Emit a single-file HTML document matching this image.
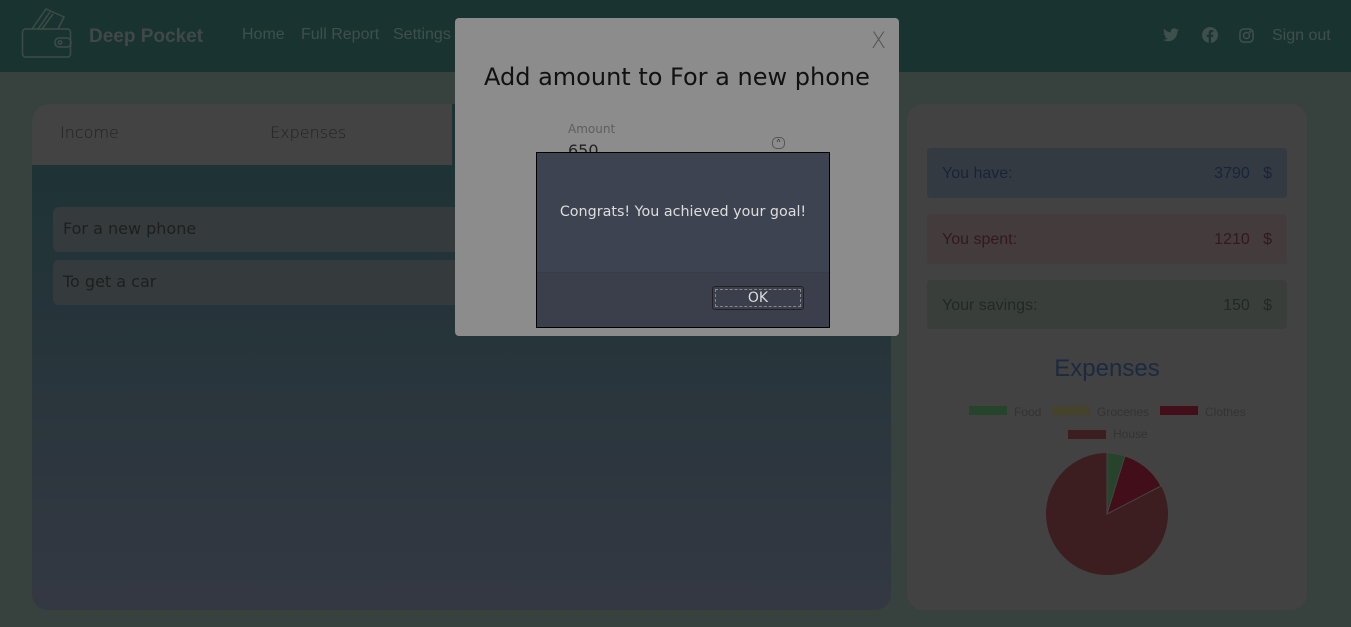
<!DOCTYPE html>
<html><head><meta charset="utf-8"><style>
*{box-sizing:border-box;margin:0;padding:0}
body{width:1351px;height:627px;overflow:hidden;background:#37413d;font-family:"Liberation Sans",sans-serif;position:relative}
.hdr{position:absolute;left:0;top:0;width:1351px;height:72px;background:#193430}
.abs{position:absolute}
.nav{color:#3f4f4b;font-size:16px;top:26px}
.card{position:absolute;border-radius:16px}
</style></head><body>
<div class="hdr"></div>
<svg class="abs" style="left:20px;top:7px" width="54" height="52" viewBox="0 0 54 52" fill="none" stroke="#3d4b48" stroke-width="1.5">
<rect x="2.5" y="22" width="48" height="28" rx="3"/>
<path d="M12 22 L26 2 L44 10 L38 22"/><path d="M18 22 L30 5 M22 22 L33 7"/>
<rect x="35" y="31" width="16" height="9" rx="4"/><circle cx="40" cy="35.5" r="1.8"/>
</svg>
<div class="abs" style="left:89px;top:26px;font-size:19px;font-weight:bold;color:#404848">Deep Pocket</div>
<div class="abs nav" style="left:242px">Home</div>
<div class="abs nav" style="left:301px">Full Report</div>
<div class="abs nav" style="left:393px">Settings</div>
<svg class="abs" style="left:1163px;top:28px" width="16" height="14" viewBox="0 0 24 20"><path fill="#3f4f4b" d="M24 2.4a10 10 0 0 1-2.8.8A5 5 0 0 0 23.3.4a10 10 0 0 1-3.1 1.2A4.9 4.9 0 0 0 11.8 6 14 14 0 0 1 1.7.9a4.9 4.9 0 0 0 1.5 6.6A4.9 4.9 0 0 1 1 6.9a4.9 4.9 0 0 0 3.9 4.8 5 5 0 0 1-2.2.1 4.9 4.9 0 0 0 4.6 3.4A9.9 9.9 0 0 1 0 17.3 14 14 0 0 0 7.5 19.5c9 0 14-7.5 14-14v-.6A10 10 0 0 0 24 2.4z"/></svg>
<svg class="abs" style="left:1202px;top:27px" width="16" height="16" viewBox="0 0 16 16"><circle cx="8" cy="8" r="8" fill="#3f4f4b"/><path d="M9 16V10h2l.3-2.3H9V6.3c0-.6.2-1 1-1h1.3V3.2A16 16 0 0 0 9.4 3C7.8 3 6.7 4 6.7 5.9v1.8H4.8V10h1.9v6z" fill="#193430"/></svg>
<svg class="abs" style="left:1239px;top:28px" width="15" height="15" viewBox="0 0 16 16" fill="none" stroke="#3f4f4b" stroke-width="1.6"><rect x="1" y="1" width="14" height="14" rx="4"/><circle cx="8" cy="8" r="3.2"/><circle cx="12" cy="4" r=".5" fill="#3f4f4b"/></svg>
<div class="abs nav" style="left:1272px;top:27px">Sign out</div>

<div class="card" style="left:32px;top:104px;width:859px;height:506px;background:linear-gradient(#1b3234,#343842);overflow:hidden">
<div style="height:61px;background:#434343;width:420px"></div>
<div class="abs" style="left:28px;top:19px;font-size:16px;color:#222;font-family:'DejaVu Sans',sans-serif;font-weight:300">Income</div>
<div class="abs" style="left:238px;top:19px;font-size:16px;color:#222;font-family:'DejaVu Sans',sans-serif;font-weight:300">Expenses</div>
<div class="abs" style="left:21px;top:103px;width:820px;height:45px;background:#353b3d;border-radius:6px;padding:12px 10px;font-size:16px;color:#1e1e1e;font-family:'DejaVu Sans',sans-serif">For a new phone</div>
<div class="abs" style="left:21px;top:156px;width:820px;height:45px;background:#353b3d;border-radius:6px;padding:12px 10px;font-size:16px;color:#1e1e1e;font-family:'DejaVu Sans',sans-serif">To get a car</div>
</div>

<div class="card" style="left:907px;top:104px;width:400px;height:506px;background:#424242">
<div class="abs" style="left:20px;top:44px;width:360px;height:50px;background:#343a42;border-radius:4px;font-size:16px;color:#18243a;padding:17px 15px">You have:<span style="position:absolute;right:15px">3790 &nbsp; $</span></div>
<div class="abs" style="left:20px;top:110px;width:360px;height:50px;background:#433b3c;border-radius:4px;font-size:16px;color:#33191e;padding:17px 15px">You spent:<span style="position:absolute;right:15px">1210 &nbsp; $</span></div>
<div class="abs" style="left:20px;top:176px;width:360px;height:49px;background:#3a3e3b;border-radius:4px;font-size:16px;color:#1e2a22;padding:17px 15px">Your savings:<span style="position:absolute;right:15px">150 &nbsp; $</span></div>
<div class="abs" style="left:0;width:400px;top:251px;text-align:center;font-size:24px;color:#1c2a40">Expenses</div>
<div class="abs" style="left:62px;top:302px;width:38px;height:9px;background:#26432c"></div><div class="abs" style="left:107px;top:301px;font-size:12px;color:#333">Food</div>
<div class="abs" style="left:145px;top:302px;width:38px;height:9px;background:#45432b"></div><div class="abs" style="left:190px;top:301px;font-size:12px;color:#333">Groceries</div>
<div class="abs" style="left:253px;top:302px;width:38px;height:9px;background:#420e19"></div><div class="abs" style="left:298px;top:301px;font-size:12px;color:#333">Clothes</div>
<div class="abs" style="left:161px;top:326px;width:38px;height:9px;background:#3d1e20"></div><div class="abs" style="left:206px;top:323px;font-size:12px;color:#333">House</div>
<svg class="abs" style="left:138px;top:348px" width="124" height="124" viewBox="-62 -62 124 124">
<circle r="61" fill="#3c1e20"/>
<path d="M0 0 L0 -61 A61 61 0 0 1 18 -58 Z" fill="#26432c" stroke="#444" stroke-width="1"/>
<path d="M0 0 L18 -58 A61 61 0 0 1 54 -28 Z" fill="#420e19" stroke="#444" stroke-width="1"/>
</svg>
</div>

<div class="abs" style="left:455px;top:18px;width:444px;height:318px;background:#8c8c8c;border-radius:4px">
<div class="abs" style="left:416px;top:11px;font-size:22px;color:#555;font-family:'DejaVu Sans',sans-serif;font-weight:300">X</div>
<div class="abs" style="left:29px;top:45px;font-size:24px;color:#111;font-family:'DejaVu Sans',sans-serif">Add amount to For a new phone</div>
<div class="abs" style="left:113px;top:104px;font-size:12px;color:#5e5e5e;font-family:'DejaVu Sans',sans-serif">Amount</div>
<div class="abs" style="left:113px;top:123px;font-size:16px;color:#222;font-family:'DejaVu Sans',sans-serif">650</div>
<div class="abs" style="left:317px;top:119px;width:13px;height:12px;border:1px solid #555;border-radius:5px;font-size:8px;text-align:center;line-height:10px;color:#222">^</div>
</div>

<div class="abs" style="left:536px;top:152px;width:294px;height:176px;background:#3d4350;border:1px solid #000">
<div class="abs" style="left:0;width:292px;top:51px;text-align:center;font-size:14.3px;color:#ddd;font-family:'DejaVu Sans',sans-serif">Congrats! You achieved your goal!</div>
<div class="abs" style="left:0;top:119px;width:292px;height:55px;background:#3a3f4b;border-top:1px solid #373c47"></div>
<div class="abs" style="left:175px;top:133px;width:92px;height:24px;border:1px solid #222;border-radius:3px;background:#3a3f4b;padding:2px">
<div style="border:1px dashed #888;height:18px;text-align:center;font-size:14px;line-height:17px;color:#ddd;font-family:'DejaVu Sans',sans-serif">OK</div></div>
</div>
</body></html>
